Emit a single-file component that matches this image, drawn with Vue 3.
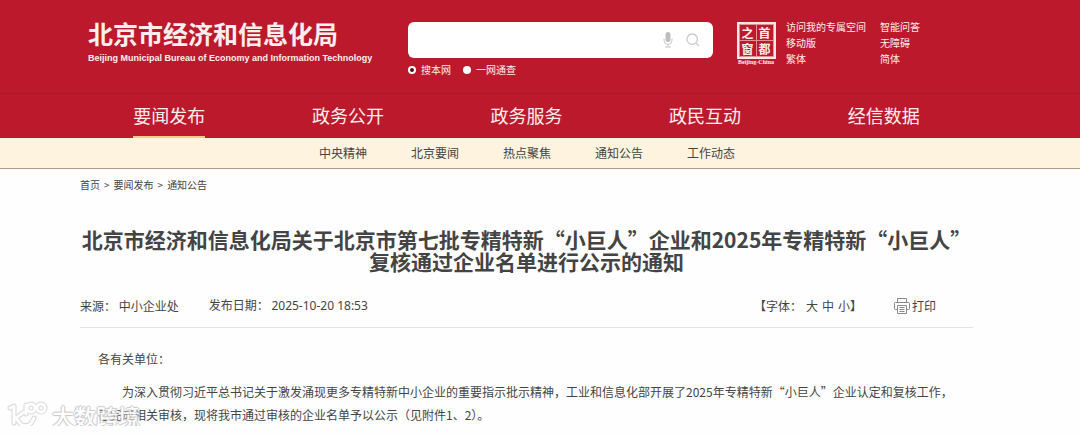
<template>
  <div class="page">
    <header class="header">
      <div class="wrap header-top">
        <a class="brand" href="#">
          <span class="brand-name">北京市经济和信息化局</span>
          <span class="brand-en">Beijing Municipal Bureau of Economy and Information Technology</span>
        </a>

        <form class="search" @submit.prevent>
          <div class="search-box">
            <input v-model="keyword" class="search-input" type="text" aria-label="搜索" />
            <button class="icon-btn" type="button" aria-label="语音">
              <svg width="10" height="16" viewBox="0 0 10 16">
                <rect x="2.5" y="0" width="5" height="10" rx="2.5" fill="#bdbdbd" />
                <path d="M1 6.5v2a4 4 0 0 0 8 0v-2M5 12.5v2.5M2 15h6" fill="none" stroke="#c8c8c8" />
              </svg>
            </button>
            <button class="icon-btn" type="submit" aria-label="搜索">
              <svg width="14" height="14" viewBox="0 0 14 14" fill="none" stroke="#cbcbcb" stroke-width="1.3">
                <circle cx="6.2" cy="6.2" r="5.2" />
                <path d="M10 10l3 3" />
              </svg>
            </button>
          </div>
          <div class="scopes">
            <label v-for="s in scopes" :key="s.value" class="scope">
              <input v-model="scope" type="radio" name="scope" :value="s.value" />
              <span>{{ s.label }}</span>
            </label>
          </div>
        </form>

        <a class="capital" href="#">
          <span class="seal">
            <span v-for="c in sealChars" :key="c" class="seal-char">{{ c }}</span>
          </span>
          <span class="capital-en">Beijing-China</span>
        </a>

        <div class="tools">
          <a v-for="t in tools" :key="t" href="#">{{ t }}</a>
        </div>
      </div>

      <nav class="wrap main-nav">
        <div v-for="(item, i) in mainNav" :key="item" class="main-item">
          <a href="#" :class="{ active: i === 0 }">{{ item }}</a>
        </div>
      </nav>
    </header>

    <nav class="sub-nav">
      <a v-for="item in subNav" :key="item" href="#">{{ item }}</a>
    </nav>

    <main class="wrap">
      <div class="crumbs">
        <a href="#">首页</a>
        <span>&gt;</span>
        <a href="#">要闻发布</a>
        <span>&gt;</span>
        <a href="#">通知公告</a>
      </div>

      <h1 class="title">
        北京市经济和信息化局关于北京市第七批专精特新“小巨人”企业和2025年专精特新“小巨人”<br />复核通过企业名单进行公示的通知
      </h1>

      <div class="meta">
        <span class="meta-source">来源： 中小企业处</span>
        <span>发布日期： <time>2025-10-20 18:53</time></span>
        <div class="font-size">
          <span>【字体：</span>
          <button type="button">大</button>
          <button type="button">中</button>
          <span><button type="button">小</button>】</span>
        </div>
        <button class="print" type="button">
          <svg width="16" height="16" viewBox="0 0 16 16" fill="none" stroke="#888">
            <path d="M3.5 4.5v-4h9v4M3.5 11.5h-2a1 1 0 0 1-1-1v-5a1 1 0 0 1 1-1h13a1 1 0 0 1 1 1v5a1 1 0 0 1-1 1h-2" />
            <path d="M3.5 7.5h9v8h-9zM5.5 9.5h5M5.5 11.5h5M5.5 13.5h5" />
          </svg>
          打印
        </button>
      </div>

      <article class="content">
        <p class="greeting">各有关单位：</p>
        <p class="para">
          为深入贯彻习近平总书记关于激发涌现更多专精特新中小企业的重要指示批示精神，工业和信息化部开展了2025年专精特新“小巨人”企业认定和复核工作，<br />已完成相关审核，现将我市通过审核的企业名单予以公示（见附件1、2）。
        </p>
      </article>
    </main>

    <div class="watermark">
      <svg width="42" height="28" viewBox="0 0 42 28" fill="none" stroke-linecap="round" stroke-linejoin="round">
        <g v-for="l in markLayers" :key="l.color" :stroke="l.color" :stroke-width="l.width">
          <path d="M3 7l4-2v17" />
          <path d="M17 11l-8 6 3 4c3 5 10 5 13 0l2-4" />
          <path d="M19 13V4" />
          <circle cx="24" cy="7" r="4" />
          <circle cx="34" cy="7" r="4" />
        </g>
      </svg>
      <span>大数跨境</span>
    </div>
  </div>
</template>

<script setup>
import { ref } from 'vue'

const keyword = ref('')
const scope = ref('site')

const scopes = [
  { value: 'site', label: '搜本网' },
  { value: 'all', label: '一网通查' }
]
const sealChars = ['之', '首', '窗', '都']
const tools = ['访问我的专属空间', '智能问答', '移动版', '无障碍', '繁体', '简体']
const mainNav = ['要闻发布', '政务公开', '政务服务', '政民互动', '经信数据']
const subNav = ['中央精神', '北京要闻', '热点聚焦', '通知公告', '工作动态']

// wide grey stroke first, white stroke on top of it
const markLayers = [
  { color: '#cfcfcf', width: 5 },
  { color: '#ffffff', width: 3 }
]
</script>

<style>
body {
  background: #fefefe;
}
</style>

<style scoped>
.page {
  position: relative;
  font-family: "Noto Sans CJK SC", sans-serif;
  font-size: 12px;
  color: #444;
}

a {
  color: inherit;
  text-decoration: none;
}

button {
  padding: 0;
  border: 0;
  background: none;
  font: inherit;
  color: inherit;
  cursor: pointer;
}

.wrap {
  padding: 0 107px 0 80px;
}

.header {
  background: #bc1a2c;
  color: #fdeeee;
}

.header-top {
  display: flex;
  align-items: flex-start;
  height: 93px;
  border-bottom: 1px solid #a91828;
}

.brand {
  width: 320px;
  padding: 17px 0 0 8px;
  white-space: nowrap;
}

.brand-name {
  display: block;
  font-size: 25px;
  line-height: 32px;
  font-weight: 700;
}

.brand-en {
  display: block;
  padding-top: 1px;
  font-family: "Liberation Sans", sans-serif;
  font-size: 9px;
  line-height: 16px;
  font-weight: 700;
}

.search {
  width: 305px;
  padding-top: 22px;
}

.search-box {
  display: flex;
  align-items: center;
  gap: 13px;
  height: 36px;
  padding: 0 13px;
  border-radius: 6px;
  background: #fff;
}

.search-input {
  flex: 1;
  min-width: 0;
  border: 0;
  outline: 0;
  background: transparent;
}

.icon-btn {
  display: flex;
}

.scopes {
  display: flex;
  gap: 12px;
  padding-top: 4px;
  font-size: 10px;
  line-height: 16px;
}

.scope {
  display: flex;
  align-items: center;
  gap: 5px;
}

.scope input {
  appearance: none;
  width: 8px;
  height: 8px;
  margin: 0;
  border-radius: 50%;
  background: #fff;
}

.scope input:checked {
  border: 2px solid #fff;
  background: #5a0d14;
}

.capital {
  display: flex;
  flex-direction: column;
  align-items: center;
  width: 42px;
  margin-left: 22px;
  padding-top: 22px;
}

.seal {
  display: grid;
  grid-template-columns: 16px 16px;
  gap: 1px;
  padding: 1px;
  border: 2px solid #fbe6e6;
  background: #e58f98;
}

.seal-char {
  background: #bc1a2c;
  font-size: 12px;
  line-height: 15px;
  font-weight: 700;
  text-align: center;
}

.capital-en {
  font-family: "Liberation Serif", serif;
  font-size: 6px;
  line-height: 6px;
  font-weight: 700;
}

.tools {
  display: grid;
  grid-template-columns: 94px auto;
  margin-left: 9px;
  padding-top: 19px;
  font-size: 10px;
  line-height: 16px;
  white-space: nowrap;
}

.main-nav {
  display: grid;
  grid-template-columns: repeat(5, 1fr);
}

.main-item {
  display: flex;
  justify-content: center;
}

.main-item a {
  font-size: 18px;
  line-height: 42px;
  border-bottom: 2px solid transparent;
}

.main-item a.active {
  border-color: #fbc98f;
}

.sub-nav {
  display: flex;
  gap: 44px;
  padding-left: 319px;
  background: #fef3de;
  border-bottom: 1px solid #b09a88;
  line-height: 30px;
}

.crumbs {
  display: flex;
  gap: 4px;
  padding-top: 7px;
  font-size: 10px;
  line-height: 18px;
}

.title {
  margin: 34px 0 0;
  font-size: 21px;
  line-height: 22px;
  font-weight: 700;
  text-align: center;
  white-space: nowrap;
}

.meta {
  display: flex;
  align-items: center;
  margin-top: 22px;
  padding-bottom: 10px;
  border-bottom: 1px solid #e4e4e4;
  line-height: 22px;
}

.meta-source {
  margin-right: 30px;
}

.meta time {
  font-family: "Noto Sans", sans-serif;
}

.font-size {
  display: flex;
  gap: 4px;
  margin-left: auto;
}

.print {
  display: flex;
  align-items: center;
  gap: 2px;
  margin: 0 37px 0 32px;
}

.content {
  padding: 19px 0 0 18px;
  line-height: 23px;
  white-space: nowrap;
}

.content p {
  margin: 0;
}

.content .para {
  margin-top: 10px;
  text-indent: 24px;
}

.watermark {
  position: absolute;
  left: 7px;
  bottom: -3px;
  display: flex;
  align-items: center;
  gap: 3px;
  font-size: 22px;
  line-height: 28px;
  font-weight: 500;
  color: #fff;
  opacity: 0.8;
  text-shadow: 1px 0 1px #bbb, -1px 0 1px #bbb, 0 1px 1px #bbb, 0 -1px 1px #bbb;
}
</style>
